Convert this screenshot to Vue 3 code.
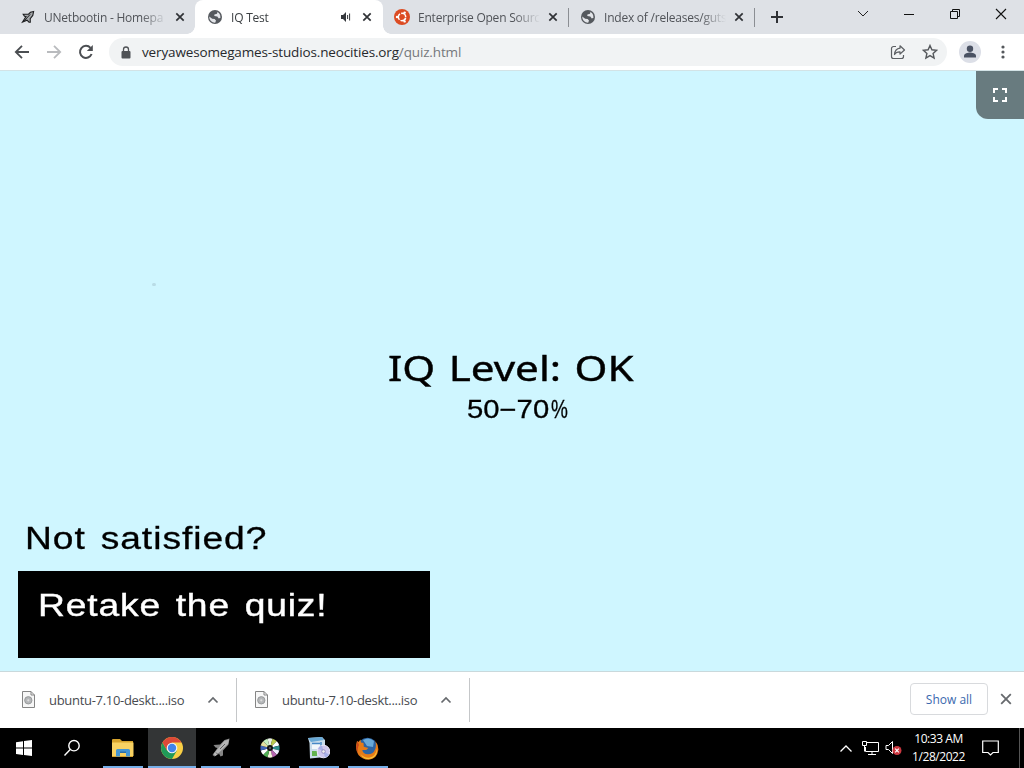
<script setup>
const tabs = [
  { title: 'UNetbootin - Homepa', icon: 'rocket', cls: 't1' },
  { title: 'IQ Test', icon: 'globe', cls: 't2 active', audio: true },
  { title: 'Enterprise Open Sourc', icon: 'ubuntu', cls: 't3' },
  { title: 'Index of /releases/guts', icon: 'globe', cls: 't4' },
]
const downloads = ['ubuntu-7.10-deskt....iso', 'ubuntu-7.10-deskt....iso']
const spokes = ['#e8f0e8', '#b9c94e', '#fff', '#2d8f8c', '#eef', '#b565b0', '#f5f5dc', '#4fae52', '#fff', '#3f65b8', '#e4e0a0', '#c7f0c0']
</script>

<template>
  <div class="screen">
    <header class="tabstrip">
      <div v-for="t in tabs" :key="t.title" class="tab" :class="t.cls">
        <svg v-if="t.icon === 'globe'" class="fav" viewBox="0 0 16 16">
          <circle cx="8" cy="8" r="7" fill="#55595e" />
          <path d="M2.2 7.6 5.2 9.8 7.6 9.9 9 11.6 8.2 13.7A5.8 5.8 0 0 1 2.2 7.6ZM8 2.3 10.5 2.8 10 4.7 7.4 5.4 7.3 7 10.3 7.4 11.8 9.4 13.5 8.7A5.8 5.8 0 0 0 8 2.3Z" fill="#e3e5e9" />
        </svg>
        <svg v-else-if="t.icon === 'ubuntu'" class="fav" viewBox="0 0 16 16">
          <circle cx="8" cy="8" r="8" fill="#dc4b22" />
          <circle cx="8" cy="8" r="3.7" fill="none" stroke="#fff" stroke-width="1.5" stroke-dasharray="6.6 1.15" stroke-dashoffset="-.6" />
          <circle cx="3" cy="8" r="1.2" fill="#fff" /><circle cx="10.6" cy="3.6" r="1.2" fill="#fff" /><circle cx="10.6" cy="12.4" r="1.2" fill="#fff" />
        </svg>
        <svg v-else class="fav" viewBox="0 0 16 16">
          <path d="M13.600 2.500 10.500 3.300 8.500 5.200 3.200 5.200 4.500 7.200 6 7.500 2.500 13 7 11.200 9 13.200 10.300 13.200 10.200 9.600 12.800 6.400Z" fill="#a4a7aa" stroke="#1c1d1f" stroke-width="1.1" />
          <path d="m4.200 11.800 6-6.400" stroke="#1c1d1f" fill="none" />
        </svg>
        <span class="title">{{ t.title }}</span>
        <svg v-if="t.audio" class="audio" viewBox="0 0 12 12"><path d="M1 4h2l3-3v10L3 8H1Z" fill="#35383c" /><path d="M7.6 4v4M9.6 2.5v7" stroke="#35383c" fill="none" /></svg>
        <svg class="x" viewBox="0 0 10 10"><path d="m1.3 1.3 7.4 7.4m0-7.4L1.3 8.7" stroke="#303236" stroke-width="1.7" /></svg>
      </div>
      <svg class="plus" viewBox="0 0 14 14"><path d="M7 1v12M1 7h12" stroke="#2f3135" stroke-width="2" /></svg>
      <div class="winbtns">
        <svg viewBox="0 0 12 12"><path d="m1 3 5 5 5-5" fill="none" stroke="#222" /></svg>
        <svg viewBox="0 0 12 12"><path d="M1 6.5h10" stroke="#111" /></svg>
        <svg viewBox="0 0 12 12"><path d="M1.5 3.5h7v7h-7ZM3.5 3V1.500h7v7H9" fill="none" stroke="#111" /></svg>
        <svg viewBox="0 0 12 12"><path d="m1 1 10 10M11 1 1 11" stroke="#111" stroke-width="1.1" /></svg>
      </div>
    </header>

    <nav class="toolbar">
      <svg class="nav" viewBox="0 0 16 16"><path d="M15 8H2M8 1.800 1.800 8 8 14.200" fill="none" stroke="#4b4e52" stroke-width="1.8" /></svg>
      <svg class="nav" viewBox="0 0 16 16"><path d="M1 8h13M8 1.800 14.200 8 8 14.200" fill="none" stroke="#b9bbbe" stroke-width="1.8" /></svg>
      <svg class="nav" viewBox="0 0 16 16"><path d="M13.600 10A6 6 0 1 1 12.500 3.900" fill="none" stroke="#4b4e52" stroke-width="2" /><path d="M14.800 1v6H8.800Z" fill="#4b4e52" /></svg>
      <div class="omni">
        <svg class="lock" viewBox="0 0 10 13"><rect x=".5" y="5" width="9" height="7.500" rx="1" fill="#4f5256" /><path d="M2.500 5V3.500a2.500 2.500 0 0 1 5 0V5" fill="none" stroke="#4f5256" stroke-width="1.300" /></svg>
        <span class="url">veryawesomegames-studios.neocities.org<i>/quiz.html</i></span>
        <svg class="share" viewBox="0 0 16 16"><path d="M6 2.500H3.500a2 2 0 0 0-2 2v8a2 2 0 0 0 2 2h8a2 2 0 0 0 2-2v-1.500" fill="none" stroke="#5c5f63" stroke-width="1.200" /><path d="M10 1.800 14.500 6 10 10V7.800C7.500 7.700 5.700 8.500 4.500 10.500 4.800 7 6.500 4.700 10 4.200Z" fill="none" stroke="#5c5f63" stroke-width="1.200" stroke-linejoin="round" /></svg>
        <svg class="star" viewBox="0 0 16 16"><path d="m8 1.500 1.900 4.300 4.700.5-3.500 3.100 1 4.600L8 11.600 3.900 14l1-4.600L1.400 6.300l4.700-.5Z" fill="none" stroke="#55585c" stroke-width="1.400" /></svg>
      </div>
      <svg class="avatar" viewBox="0 0 22 22"><circle cx="11" cy="11" r="11" fill="#dcdfe7" /><circle cx="11" cy="7.800" r="3.200" fill="#4a5263" /><path d="M5 16.600V15c0-2.700 4-3.500 6-3.500s6 .8 6 3.500v1.600Z" fill="#4a5263" /></svg>
      <svg class="dots" viewBox="0 0 4 14"><circle cx="2" cy="2" r="1.600" /><circle cx="2" cy="7" r="1.600" /><circle cx="2" cy="12" r="1.600" /></svg>
    </nav>

    <main class="page">
      <button class="full" aria-label="Fullscreen">
        <svg viewBox="0 0 14 14"><path d="M1 5V1h4M9 1h4v4M13 9v4H9M5 13H1V9" fill="none" stroke="#fff" stroke-width="2" /></svg>
      </button>
      <div class="speck"></div>
      <h1><span>IQ Level: OK</span></h1>
      <p class="range"><span>50−70</span><b>%</b></p>
      <p class="ask"><span>Not satisfied?</span></p>
      <button class="retake"><span>Retake the quiz!</span></button>
    </main>

    <section class="shelf">
      <div v-for="(d, i) in downloads" :key="i" class="dl">
        <svg class="file" viewBox="0 0 13 17"><path d="M.5.500h8.500l3.500 3.500v12.500H.5Z" fill="#f7f7f7" stroke="#858585" /><path d="M9 .5V4h3.500" fill="none" stroke="#858585" /><circle cx="6.300" cy="9.300" r="3.700" fill="#b5b7b9" stroke="#8d8f91" stroke-width=".8" /><circle cx="6.300" cy="9.300" r="1.100" fill="#ddd" /></svg>
        <span class="fname">{{ d }}</span>
        <svg class="chev" viewBox="0 0 12 8"><path d="m1.500 6.500 4.500-4.500 4.500 4.500" fill="none" stroke="#66696d" stroke-width="1.700" /></svg>
      </div>
      <button class="showall">Show all</button>
      <svg class="close" viewBox="0 0 12 12"><path d="m1.200 1.200 9.600 9.600m0-9.600-9.600 9.600" stroke="#66696d" stroke-width="1.800" /></svg>
    </section>

    <footer class="taskbar">
      <div class="slot start"><svg width="16" height="16" viewBox="0 0 16 16"><path d="M0 2.200 7 1.200V7.500H0ZM8 1.100 16 0v7.500H8ZM0 8.500h7v6.400l-7-1ZM8 8.500h8V16l-8-1.100Z" fill="#fff" /></svg></div>
      <div class="slot search"><svg width="18" height="18" viewBox="0 0 18 18"><circle cx="11" cy="6.700" r="5.200" fill="none" stroke="#fff" stroke-width="1.400" /><path d="M7.200 10.500 1.500 16.500" stroke="#fff" stroke-width="1.400" /></svg></div>
      <div class="slot run">
        <svg width="22" height="20" viewBox="0 0 22 20"><path d="M0 2Q0 1 1 1h7l2 2h11v16H0Z" fill="#d6a32d" /><path d="M0 4.500h21.500V18H0Z" fill="#f8d263" /><path d="M4 18.500v-6q0-1.500 1.500-1.500h11q1.500 0 1.500 1.500v6h-4V15H8v3.500Z" fill="#4496d3" /><path d="M8 13.500h6V15H8Z" fill="#2c6fa8" /></svg>
      </div>
      <div class="slot run chrome">
        <svg width="22" height="22" viewBox="0 0 22 22"><circle cx="11" cy="11" r="11" fill="#f9cf45" /><path d="M1.500 5.500A11 11 0 0 0 11 22l4.800-8.300L11 11 6.300 13.700Z" fill="#209a58" /><path d="M1.500 5.500A11 11 0 0 1 20.500 5.500H11L6.200 13.700Z" fill="#dc4937" /><circle cx="11" cy="11" r="5.300" fill="#f4f5f4" /><circle cx="11" cy="11" r="4.200" fill="#4284ea" /></svg>
      </div>
      <div class="slot run">
        <svg width="20" height="20" viewBox="0 0 20 20"><path d="M18.500.5 13.500 2 9 6.500 2.500 7 4.500 9.500 6.500 10 1.500 17 3.500 18.500 8 15.500 9.500 18.500 12 17.500 12 12.500 17.500 6.500Z" fill="#858585" /><path d="M18 1.500 13.500 2.800 2.500 16 4.500 18 17 6Z" fill="#b7b7b7" /><path d="m9 11 5-5M5 14.500l2 2" stroke="#5f5f5f" /></svg>
      </div>
      <div class="slot run">
        <svg width="20" height="20" viewBox="0 0 20 20"><path v-for="(c, i) in spokes" :key="i" d="M10 10 7.500.700A9.600 9.600 0 0 1 12.500.700Z" :fill="c" :transform="`rotate(${i * 30} 10 10)`" /><circle cx="10" cy="10" r="3" fill="#111" /><circle cx="10" cy="10" r="1.200" fill="#555" /></svg>
      </div>
      <div class="slot run">
        <svg width="22" height="22" viewBox="0 0 22 22"><path d="M0 1 14 0l3 3v17L2 21.500 1.500 6Z" fill="#c9dcea" /><path d="m0 1 14-1 2 3-13 2Z" fill="#69a9d6" /><path d="M4 7h8v5H4Z" fill="#f2f8fb" /><path d="M4 6.500h8M13 5v5" stroke="#4688c6" stroke-width="1.500" /><path d="M4 14h5v5H4Z" fill="#62b44e" /><circle cx="15.500" cy="14.500" r="6.300" fill="#cfc7ec" stroke="#ece8f8" /><path d="M15.500 14.500 10 11.500A6.300 6.300 0 0 1 14 8.500ZM15.500 14.500l5.500 3a6.300 6.300 0 0 1-4 3Z" fill="#a6afe6" /><circle cx="15.500" cy="14.500" r="1.800" fill="#eee" stroke="#8279b0" stroke-width=".7" /></svg>
      </div>
      <div class="slot run">
        <svg width="23" height="23" viewBox="0 0 23 23"><circle cx="11.500" cy="10.500" r="9.800" fill="#2d64a3" /><path d="M7 3Q13-.5 18 4l-1 6-6-1Z" fill="#69a9d8" /><path d="M1 4Q-1.500 12 2.500 18q4.500 5 10.500 4.700Q21 22 22.300 13q.3-5-3-9 1.500 5-.5 9-2 4.500-7 4.300-5-.3-5.500-4.300l4 0 2-2-4.500-1.200L7.500 6 5 5.500 4.500 2.500 2.500 5Z" fill="#e77b17" /><path d="M4.500 17q4 4.500 9.500 3.500 6-1.500 7-9 .5 6.500-3.500 9-4 2.500-8.500 1-3-1.200-4.500-4.500Z" fill="#f7c437" /><path d="M1.500 4 0 11l2 6q-1-6 1-9Z" fill="#c9471b" /></svg>
      </div>
      <div class="tray">
        <svg width="14" height="9" viewBox="0 0 14 9"><path d="m1.500 7.500 5.500-5.500 5.500 5.500" fill="none" stroke="#fff" stroke-width="1.300" /></svg>
        <svg class="net" width="17" height="15" viewBox="0 0 17 15"><path d="M5 1.500h11.500v9H3.500V6M10 10.500v3M6 13.500h8M.5.500h4v4h-4ZM2.500 4.500v6" fill="none" stroke="#fff" /></svg>
        <svg class="vol" width="17" height="16" viewBox="0 0 17 16"><path d="M1 5.500h2.500l4-4v12l-4-4H1Z" fill="none" stroke="#fff" /><circle cx="12" cy="10.500" r="4.500" fill="#cc3840" /><path d="m10.200 8.700 3.600 3.600m0-3.600-3.600 3.600" stroke="#fff" stroke-width="1.200" /></svg>
        <div class="clock"><span>10:33 AM</span><span>1/28/2022</span></div>
        <svg class="note" width="17" height="17" viewBox="0 0 17 17"><path d="M.7 1h15.600v11.500H11l-2.500 2.500L6 12.500H.7Z" fill="none" stroke="#fff" stroke-width="1.200" /></svg>
        <div class="peek"></div>
      </div>
    </footer>
  </div>
</template>

<style>
body { margin: 0; overflow: hidden; }
</style>
<style scoped>
* { box-sizing: border-box; }
.screen { width: 1024px; height: 768px; display: flex; flex-direction: column; font-family: "Open Sans", "Noto Sans", sans-serif; background: #fff; overflow: hidden; }
svg { flex: none; display: block; }
button { font: inherit; border: 0; padding: 0; }
.tabstrip { height: 34px; background: #dee1e6; display: flex; align-items: center; position: relative; }
.tab { height: 34px; display: flex; align-items: center; padding-right: 11px; font-size: 12px; letter-spacing: -.22px; color: #505358; }
.t1 { width: 195px; padding-left: 20px; padding-right: 10px; }
.tab.active { width: 188px; padding-left: 12px; background: #fff; border-radius: 8px 8px 0 0; color: #3c4043; position: relative; }
.active::before, .active::after { content: ""; position: absolute; bottom: 0; width: 8px; height: 8px; }
.active::before { left: -8px; background: radial-gradient(circle at 0 0, transparent 7.500px, #fff 8px); }
.active::after { right: -8px; background: radial-gradient(circle at 100% 0, transparent 7.500px, #fff 8px); }
.t3, .t4 { width: 186px; padding-left: 11px; position: relative; }
.t3::after, .t4::after { content: ""; position: absolute; right: 0; top: 8px; width: 1px; height: 19px; background: #8b8e93; }
.fav { width: 16px; height: 16px; }
.title { flex: 1; min-width: 0; white-space: nowrap; margin-left: 8px; margin-right: 8px; mask-image: linear-gradient(90deg, #000 calc(100% - 26px), transparent); }
.x { width: 10px; height: 10px; }
.audio { width: 12px; height: 12px; margin-right: 10px; }
.plus { width: 14px; height: 14px; margin-left: 15px; }
.winbtns { margin-left: auto; display: flex; gap: 34px; padding-right: 17px; transform: translateY(-3px); }
.winbtns svg { width: 12px; height: 12px; }
.toolbar { height: 37px; background: #fff; border-bottom: 1px solid #d3e3e6; display: flex; align-items: center; padding-left: 14px; }
.nav { width: 16px; height: 16px; margin-right: 16px; }
.omni { width: 838px; height: 28px; border-radius: 14px; background: #f1f3f4; margin-left: -1px; display: flex; align-items: center; padding: 0 9px 0 12px; }
.lock { width: 10px; height: 13px; }
.url { font-size: 13.500px; letter-spacing: -.145px; margin-left: 11px; color: #27292c; flex: 1; white-space: nowrap; }
.url i { font-style: normal; color: #75787c; }
.share { width: 16px; height: 16px; margin-right: 16px; }
.star { width: 16px; height: 16px; }
.avatar { width: 22px; height: 22px; margin-left: 12px; }
.dots { width: 4px; height: 14px; margin-left: 20px; fill: #55585c; }
.page { height: 600px; background: #cff6ff; display: flex; flex-direction: column; position: relative; }
.full { position: absolute; right: 0; top: 0; width: 48px; height: 48px; background: #687b7f; border-bottom-left-radius: 12px; display: flex; align-items: center; justify-content: center; }
.full svg { width: 14px; height: 14px; }
.speck { position: absolute; left: 152px; top: 212px; width: 4px; height: 3px; background: #b9dce6; border-radius: 2px; }
.page span, .range b { display: inline-block; transform-origin: 0 50%; white-space: nowrap; }
h1 { font: 400 34px/44px "Noto Sans", sans-serif; margin: 275px 0 0 388px; color: #000; height: 44px; -webkit-text-stroke: .4px #000; }
h1 span { transform: scaleX(1.24); word-spacing: 2px; }
.range { font: 25px/30px "Liberation Sans", Arial, sans-serif; height: 30px; margin: 4px 0 0 467px; color: #000; display: flex; -webkit-text-stroke: .3px #000; }
.range span { width: 84px; transform: scaleX(1.17); }
.range b { font-weight: 400; transform: scaleX(.76); }
.ask { font: 31px/40px "Liberation Sans", Arial, sans-serif; height: 40px; margin: 95px 0 0 25px; color: #000; -webkit-text-stroke: .3px #000; }
.ask span { transform: scaleX(1.2); letter-spacing: .8px; word-spacing: 3px; }
.retake { width: 412px; height: 87px; background: #000; color: #fff; margin: 12px 0 0 18px; text-align: left; padding: 0 0 17px 20px; font: 31px/40px "Liberation Sans", Arial, sans-serif; -webkit-text-stroke: .4px #fff; }
.retake span { transform: scaleX(1.2); letter-spacing: .7px; word-spacing: 3px; }
.shelf { height: 57px; background: #fff; border-top: 1px solid #c9d9dc; display: flex; align-items: center; }
.dl { width: 233px; height: 44px; display: flex; align-items: center; padding-left: 18px; border-right: 1px solid #c5c7c9; }
.dl:first-child { width: 237px; padding-left: 22px; }
.file { width: 13px; height: 17px; transform: translateY(-1px); }
.fname { font-size: 13px; letter-spacing: -.3px; color: #484b50; margin-left: 14px; width: 158px; white-space: nowrap; }
.chev { width: 12px; height: 8px; }
.showall { margin-left: auto; width: 78px; height: 32px; border: 1px solid #d8dadd; border-radius: 4px; background: #fff; color: #3a68ae; font-size: 12px; font-weight: 500; transform: translateY(-1px); }
.close { width: 12px; height: 12px; margin: 0 12px; transform: translateY(-1px); }
.taskbar { height: 40px; background: #000; display: flex; }
.slot { width: 49px; height: 40px; display: flex; align-items: center; justify-content: center; position: relative; }
.start { width: 48px; } .search { width: 50px; padding-right: 2px; }
.run::after { content: ""; position: absolute; left: 5px; right: 4px; bottom: 0; height: 2px; background: #76aee8; }
.chrome { background: #333536; margin-left: 1px; width: 48px; }
.chrome::after { left: 0; right: 0; }
.tray { margin-left: auto; display: flex; align-items: center; position: relative; color: #fff; }
.net { margin-left: 9px; } .vol { margin-left: 6px; }
.clock { width: 71px; padding-left: 2px; font-size: 12px; line-height: 18px; display: flex; flex-direction: column; align-items: center; letter-spacing: -.45px; white-space: nowrap; }
.note { margin-left: 9px; margin-right: 20px; }
.peek { width: 1px; height: 40px; background: #555; margin-right: 4px; }
</style>
